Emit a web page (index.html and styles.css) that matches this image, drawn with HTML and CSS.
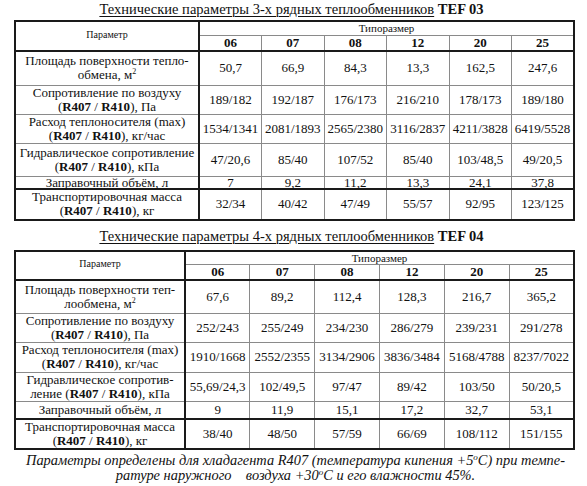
FILE: index.html
```html
<!DOCTYPE html>
<html lang="ru">
<head>
<meta charset="utf-8">
<link rel="stylesheet" href="styles.css">
</head>
<body>
<div class="page">
  <h2 class="title t1"><u>Технические параметры 3-х рядных теплообменников</u> <b>TEF 03</b></h2>
  <table class="spec s1">
    <colgroup>
      <col class="cp"><col><col><col><col><col><col>
    </colgroup>
    <tr class="h1">
      <th class="pname" rowspan="2">Параметр</th>
      <th class="tipo" colspan="6">Типоразмер</th>
    </tr>
    <tr class="h2">
      <th>06</th><th>07</th><th>08</th><th>12</th><th>20</th><th>25</th>
    </tr>
    <tr class="r1">
      <td class="p">Площадь поверхности тепло-<br>обмена, м<sup>2</sup></td>
      <td>50,7</td><td>66,9</td><td>84,3</td><td>13,3</td><td>162,5</td><td>247,6</td>
    </tr>
    <tr class="r2">
      <td class="p">Сопротивление по воздуху<br>(<b>R407</b> / <b>R410</b>), Па</td>
      <td>189/182</td><td>192/187</td><td>176/173</td><td>216/210</td><td>178/173</td><td>189/180</td>
    </tr>
    <tr class="r3">
      <td class="p">Расход теплоносителя (max)<br>(<b>R407</b> / <b>R410</b>), кг/час</td>
      <td>1534/1341</td><td>2081/1893</td><td>2565/2380</td><td>3116/2837</td><td>4211/3828</td><td>6419/5528</td>
    </tr>
    <tr class="r4">
      <td class="p">Гидравлическое сопротивление<br>(<b>R407</b> / <b>R410</b>), кПа</td>
      <td>47/20,6</td><td>85/40</td><td>107/52</td><td>85/40</td><td>103/48,5</td><td>49/20,5</td>
    </tr>
    <tr class="r5">
      <td class="p">Заправочный объём, л</td>
      <td>7</td><td>9,2</td><td>11,2</td><td>13,3</td><td>24,1</td><td>37,8</td>
    </tr>
    <tr class="r6">
      <td class="p">Транспортировочная масса<br>(<b>R407</b> / <b>R410</b>), кг</td>
      <td>32/34</td><td>40/42</td><td>47/49</td><td>55/57</td><td>92/95</td><td>123/125</td>
    </tr>
  </table>

  <h2 class="title t2"><u>Технические параметры 4-х рядных теплообменников</u> <b>TEF 04</b></h2>
  <table class="spec s2">
    <colgroup>
      <col class="cp"><col><col><col><col><col><col>
    </colgroup>
    <tr class="h1">
      <th class="pname" rowspan="2">Параметр</th>
      <th class="tipo" colspan="6">Типоразмер</th>
    </tr>
    <tr class="h2">
      <th>06</th><th>07</th><th>08</th><th>12</th><th>20</th><th>25</th>
    </tr>
    <tr class="r1">
      <td class="p">Площадь поверхности теп-<br>лообмена, м<sup>2</sup></td>
      <td>67,6</td><td>89,2</td><td>112,4</td><td>128,3</td><td>216,7</td><td>365,2</td>
    </tr>
    <tr class="r2">
      <td class="p">Сопротивление по воздуху<br>(<b>R407</b> / <b>R410</b>), Па</td>
      <td>252/243</td><td>255/249</td><td>234/230</td><td>286/279</td><td>239/231</td><td>291/278</td>
    </tr>
    <tr class="r3">
      <td class="p">Расход теплоносителя (max)<br>(<b>R407</b> / <b>R410</b>), кг/час</td>
      <td>1910/1668</td><td>2552/2355</td><td>3134/2906</td><td>3836/3484</td><td>5168/4788</td><td>8237/7022</td>
    </tr>
    <tr class="r4">
      <td class="p">Гидравлическое сопротив-<br>ление (<b>R407</b> / <b>R410</b>), кПа</td>
      <td>55,69/24,3</td><td>102/49,5</td><td>97/47</td><td>89/42</td><td>103/50</td><td>50/20,5</td>
    </tr>
    <tr class="r5">
      <td class="p">Заправочный объём, л</td>
      <td>9</td><td>11,9</td><td>15,1</td><td>17,2</td><td>32,7</td><td>53,1</td>
    </tr>
    <tr class="r6">
      <td class="p">Транспортировочная масса<br>(<b>R407</b> / <b>R410</b>), кг</td>
      <td>38/40</td><td>48/50</td><td>57/59</td><td>66/69</td><td>108/112</td><td>151/155</td>
    </tr>
  </table>

  <p class="note">Параметры определены для хладагента R407 (температура кипения +5<sup>o</sup>C) при темпе-<br>ратуре наружного &nbsp;&nbsp;&nbsp;воздуха +30<sup>o</sup>C и его влажности 45%.</p>
</div>
</body>
</html>
```

FILE: styles.css
```css
html, body {
  margin: 0;
  padding: 0;
  background: #fff;
}

body {
  font-family: "Liberation Serif", "Times New Roman", serif;
  color: #111;
}

.page {
  width: 587px;
  height: 486px;
  overflow: hidden;
  padding-top: 1px;
  box-sizing: border-box;
}

.title {
  margin: 0;
  font-family: "Liberation Serif", serif;
  font-size: 14.5px;
  font-weight: normal;
  line-height: 17px;
  text-align: center;
  color: #111;
  padding-right: 4px;
}

.title u {
  text-decoration-thickness: 1px;
  text-underline-offset: 2px;
}

.title b {
  font-weight: bold;
}

.t1 {
  margin-bottom: 2px;
}

.t2 {
  margin-top: 7px;
  margin-bottom: 5px;
}

.spec {
  margin-left: 14px;
  width: 561px;
  border-collapse: collapse;
  table-layout: fixed;
  border: 2px solid #1a1a1a;
  font-family: "Liberation Serif", serif;
}

.s1 .cp { width: 184px; }
.s2 .cp { width: 170px; }

.spec th,
.spec td {
  padding: 0;
  text-align: center;
  vertical-align: middle;
  font-size: 13px;
  line-height: 14px;
  border: 1px solid #8a8a8a;
  white-space: nowrap;
}

.spec th {
  font-weight: bold;
}

.spec th.pname {
  font-weight: normal;
  font-size: 10px;
  line-height: 12px;
  border-right: 2px solid #1a1a1a;
  border-bottom: 2px solid #1a1a1a;
  padding-bottom: 3px;
}

.spec th.tipo {
  font-weight: normal;
  font-size: 11px;
  line-height: 12px;
}

.spec .h2 th {
  border-bottom: 2px solid #1a1a1a;
  font-size: 13px;
  line-height: 14px;
}

.spec td.p {
  border-right: 2px solid #1a1a1a;
  font-size: 13px;
}

.spec .r6 td {
  border-top: 2px solid #1a1a1a;
}

.spec sup {
  font-size: 8px;
  line-height: 0;
  vertical-align: 5px;
}

.s1 .h1 { height: 14px; }
.s1 .h2 { height: 16px; }
.s1 .r1 { height: 34px; }
.s1 .r2 { height: 27px; }
.s1 .r3 { height: 29px; }
.s1 .r4 { height: 33px; }
.s1 .r5 { height: 12px; }
.s1 .r6 { height: 31px; }

.s1 .r5 td { line-height: 11px; }
.s2 .r5 td { line-height: 16px; }

.s2 .h1 { height: 12px; }
.s2 .h2 { height: 16px; }
.s2 .r1 { height: 33px; }
.s2 .r2 { height: 29px; }
.s2 .r3 { height: 30px; }
.s2 .r4 { height: 29px; }
.s2 .r5 { height: 18px; }
.s2 .r6 { height: 29px; }

.note {
  margin: 3px 0 0 0;
  font-family: "Liberation Serif", serif;
  font-style: italic;
  font-size: 14.4px;
  line-height: 15px;
  text-align: center;
  padding-left: 4px;
  color: #111;
}

.note sup {
  font-size: 9px;
  line-height: 0;
  vertical-align: 5px;
}
```
